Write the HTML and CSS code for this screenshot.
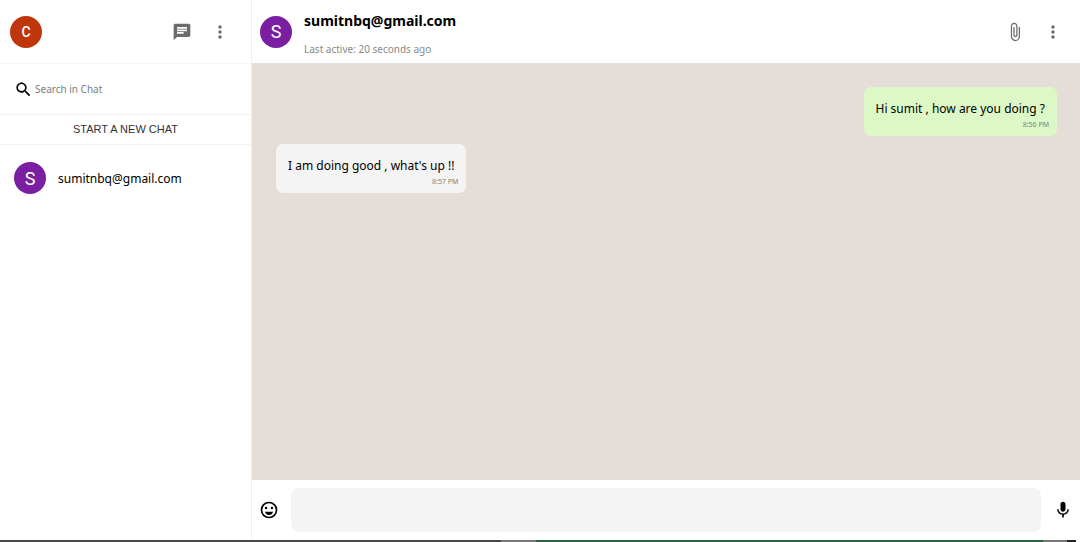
FILE: index.html
```html
<!DOCTYPE html>
<html lang="en">
<head>
  <meta charset="UTF-8">
  <meta name="viewport" content="width=device-width, initial-scale=1">
  <title>Chat</title>
  <link rel="stylesheet" href="styles.css">
</head>
<body>
  <div class="app">
    <aside class="sidebar">
      <header class="sidebar-header">
        <span class="avatar avatar-own">C</span>
        <div class="header-icons">
          <button class="icon-btn" type="button" aria-label="Chats">
            <svg viewBox="0 0 24 24"><path d="M20 2H4c-1.100 0-1.990.9-1.990 2L2 22l4-4h14c1.100 0 2-.9 2-2V4c0-1.100-.9-2-2-2zM6 9h12v2H6V9zm8 5H6v-2h8v2zm4-6H6V6h12v2z"/></svg>
          </button>
          <button class="icon-btn" type="button" aria-label="Menu">
            <svg viewBox="0 0 24 24"><path d="M12 8c1.100 0 2-.9 2-2s-.9-2-2-2-2 .9-2 2 .9 2 2 2zm0 2c-1.100 0-2 .9-2 2s.9 2 2 2 2-.9 2-2-.9-2-2-2zm0 6c-1.100 0-2 .9-2 2s.9 2 2 2 2-.9 2-2-.9-2-2-2z"/></svg>
          </button>
        </div>
      </header>

      <label class="search">
        <svg viewBox="0 0 24 24" aria-hidden="true"><path d="M15.500 14h-.79l-.28-.27C15.410 12.590 16 11.110 16 9.500 16 5.910 13.090 3 9.500 3S3 5.910 3 9.500 5.910 16 9.500 16c1.610 0 3.090-.59 4.230-1.570l.27.28v.79l5 4.990L20.490 19l-4.990-5zm-6 0C7.010 14 5 11.990 5 9.500S7.010 5 9.500 5 14 7.010 14 9.500 11.990 14 9.500 14z"/></svg>
        <input type="text" placeholder="Search in Chat" aria-label="Search in Chat">
      </label>

      <button class="new-chat" type="button">START A NEW CHAT</button>

      <a class="contact" href="#">
        <span class="avatar">S</span>
        <span>sumitnbq@gmail.com</span>
      </a>
    </aside>

    <main class="chat">
      <header class="chat-header">
        <span class="avatar">S</span>
        <div class="chat-info">
          <h1>sumitnbq@gmail.com</h1>
          <p>Last active: 20 seconds ago</p>
        </div>
        <div class="header-icons">
          <button class="icon-btn" type="button" aria-label="Attach">
            <svg viewBox="0 0 24 24"><path d="M16.500 6v11.500c0 2.210-1.790 4-4 4s-4-1.790-4-4V5c0-1.380 1.120-2.500 2.500-2.500s2.500 1.120 2.500 2.500v10.500c0 .55-.45 1-1 1s-1-.45-1-1V6H10v9.500c0 1.380 1.120 2.500 2.500 2.500s2.500-1.120 2.500-2.500V5c0-2.210-1.790-4-4-4S7 2.790 7 5v12.500c0 3.040 2.460 5.500 5.500 5.500s5.500-2.460 5.500-5.500V6h-1.500z"/></svg>
          </button>
          <button class="icon-btn" type="button" aria-label="More">
            <svg viewBox="0 0 24 24"><path d="M12 8c1.100 0 2-.9 2-2s-.9-2-2-2-2 .9-2 2 .9 2 2 2zm0 2c-1.100 0-2 .9-2 2s.9 2 2 2 2-.9 2-2-.9-2-2-2zm0 6c-1.100 0-2 .9-2 2s.9 2 2 2 2-.9 2-2-.9-2-2-2z"/></svg>
          </button>
        </div>
      </header>

      <section class="messages">
        <div class="message sent">
          <p>Hi sumit , how are you doing ?</p>
          <time>8:56 PM</time>
        </div>
        <div class="message">
          <p>I am doing good , what's up !!</p>
          <time>8:57 PM</time>
        </div>
      </section>

      <form class="composer">
        <button class="icon-btn dark" type="button" aria-label="Emoji">
          <svg viewBox="0 0 24 24"><path fill-rule="evenodd" d="M12 2a10 10 0 1 0 0 20 10 10 0 0 0 0-20zm0 18a8 8 0 1 1 0-16 8 8 0 0 1 0 16z"/><circle cx="8.500" cy="9.500" r="1.500"/><circle cx="15.500" cy="9.500" r="1.500"/><path d="M12 18c2.280 0 4.220-1.660 5-4H7c.78 2.340 2.720 4 5 4z"/></svg>
        </button>
        <input type="text" aria-label="Message">
        <button class="icon-btn dark" type="button" aria-label="Record">
          <svg viewBox="0 0 24 24"><path d="M12 14c1.660 0 2.990-1.340 2.990-3L15 5c0-1.660-1.340-3-3-3S9 3.340 9 5v6c0 1.660 1.340 3 3 3zm5.300-3c0 3-2.540 5.100-5.300 5.100S6.700 14 6.700 11H5c0 3.410 2.720 6.230 6 6.720V21h2v-3.280c3.280-.48 6-3.300 6-6.720h-1.700z"/></svg>
        </button>
      </form>
    </main>
  </div>
  <div class="strip"></div>
</body>
</html>
```

FILE: styles.css
```css
* { box-sizing: border-box; }

body {
  display: flex;
  flex-direction: column;
  min-height: 100vh;
  margin: 0;
  background: #fff;
  color: #000;
  font-family: "Segoe UI", "Noto Sans", sans-serif;
  font-size: 12px;
}

button, input {
  font-family: inherit;
  border: none;
  padding: 0;
}

h1, p { margin: 0; }

svg {
  display: block;
  fill: currentColor;
}

.app {
  flex: 1;
  display: flex;
}

.sidebar {
  width: 252px;
  flex-shrink: 0;
  border-right: 1px solid #f0f0f0;
}

.sidebar-header, .chat-header {
  display: flex;
  align-items: center;
  height: 64px;
  border-bottom: 1px solid #f6f6f6;
}

.sidebar-header {
  justify-content: space-between;
  padding: 0 21px 0 10px;
}

.avatar {
  display: flex;
  align-items: center;
  justify-content: center;
  flex-shrink: 0;
  width: 32px;
  height: 32px;
  border-radius: 50%;
  background: #7b1fa2;
  color: #fff;
  font-family: Roboto, sans-serif;
  font-size: 18px;
}

.avatar-own {
  background: #bf360c;
  font-size: 14px;
  font-weight: 500;
}

.header-icons {
  display: flex;
  gap: 18px;
}

.icon-btn {
  flex-shrink: 0;
  width: 20px;
  height: 20px;
  background: none;
  color: #6b6b6b;
  cursor: pointer;
}

.icon-btn.dark { color: #000; }

.search {
  display: flex;
  align-items: center;
  gap: 2px;
  height: 50px;
  padding: 0 14px;
}

.search svg {
  width: 19px;
  height: 19px;
  flex-shrink: 0;
}

.search input {
  flex: 1;
  min-width: 0;
  background: none;
  font-size: 10px;
}

.search input::placeholder {
  color: #78807e;
  opacity: 1;
}

.new-chat {
  display: block;
  width: 100%;
  height: 31px;
  padding-bottom: 2px;
  background: #fff;
  border-top: 1px solid #f2f2f2;
  border-bottom: 1px solid #f2f2f2;
  color: #333;
  font-family: Arial, "Liberation Sans", sans-serif;
  font-size: 11px;
  cursor: pointer;
}

.contact {
  display: flex;
  align-items: center;
  gap: 12px;
  height: 66px;
  padding: 0 14px;
  color: inherit;
  text-decoration: none;
}

.chat {
  flex: 1;
  min-width: 0;
  display: flex;
  flex-direction: column;
}

.chat-header {
  gap: 12px;
  height: 63px;
  padding: 0 17px 0 8px;
  border-bottom: none;
}

.chat-info {
  flex: 1;
  padding-top: 6px;
}

.chat-info h1 {
  color: #000;
  font-size: 14px;
  line-height: 20px;
}

.chat-info p {
  margin-top: 8px;
  color: #858b88;
  font-size: 10px;
  line-height: 20px;
}

.messages {
  flex: 1;
  display: flex;
  flex-direction: column;
  align-items: flex-start;
  gap: 8px;
  padding: 24px 23px 24px 24px;
  background: #e5ddd8;
}

.message {
  padding: 12px 8px 6px 12px;
  border-radius: 7px;
  background: #f4f4f4;
}

.message.sent {
  align-self: flex-end;
  background: #dcf8c6;
}

.message p {
  padding-right: 4px;
  line-height: 20px;
}

.message time {
  display: block;
  color: #7c857a;
  font-size: 7px;
  line-height: 11px;
  text-align: right;
}

.composer {
  display: flex;
  align-items: center;
  gap: 12px;
  height: 60px;
  padding: 0 7px;
}

.composer input {
  flex: 1;
  min-width: 0;
  height: 44px;
  padding: 0 12px;
  border-radius: 8px;
  background: #f4f4f4;
  font-size: 12px;
}

.strip {
  height: 2px;
  background: linear-gradient(90deg, #484848 46.400%, #777 46.400% 49.600%, #2c6442 49.600% 96.600%, #777 96.600% 98.800%, #222 98.800% 99.600%, #fff 99.600%);
}
```
